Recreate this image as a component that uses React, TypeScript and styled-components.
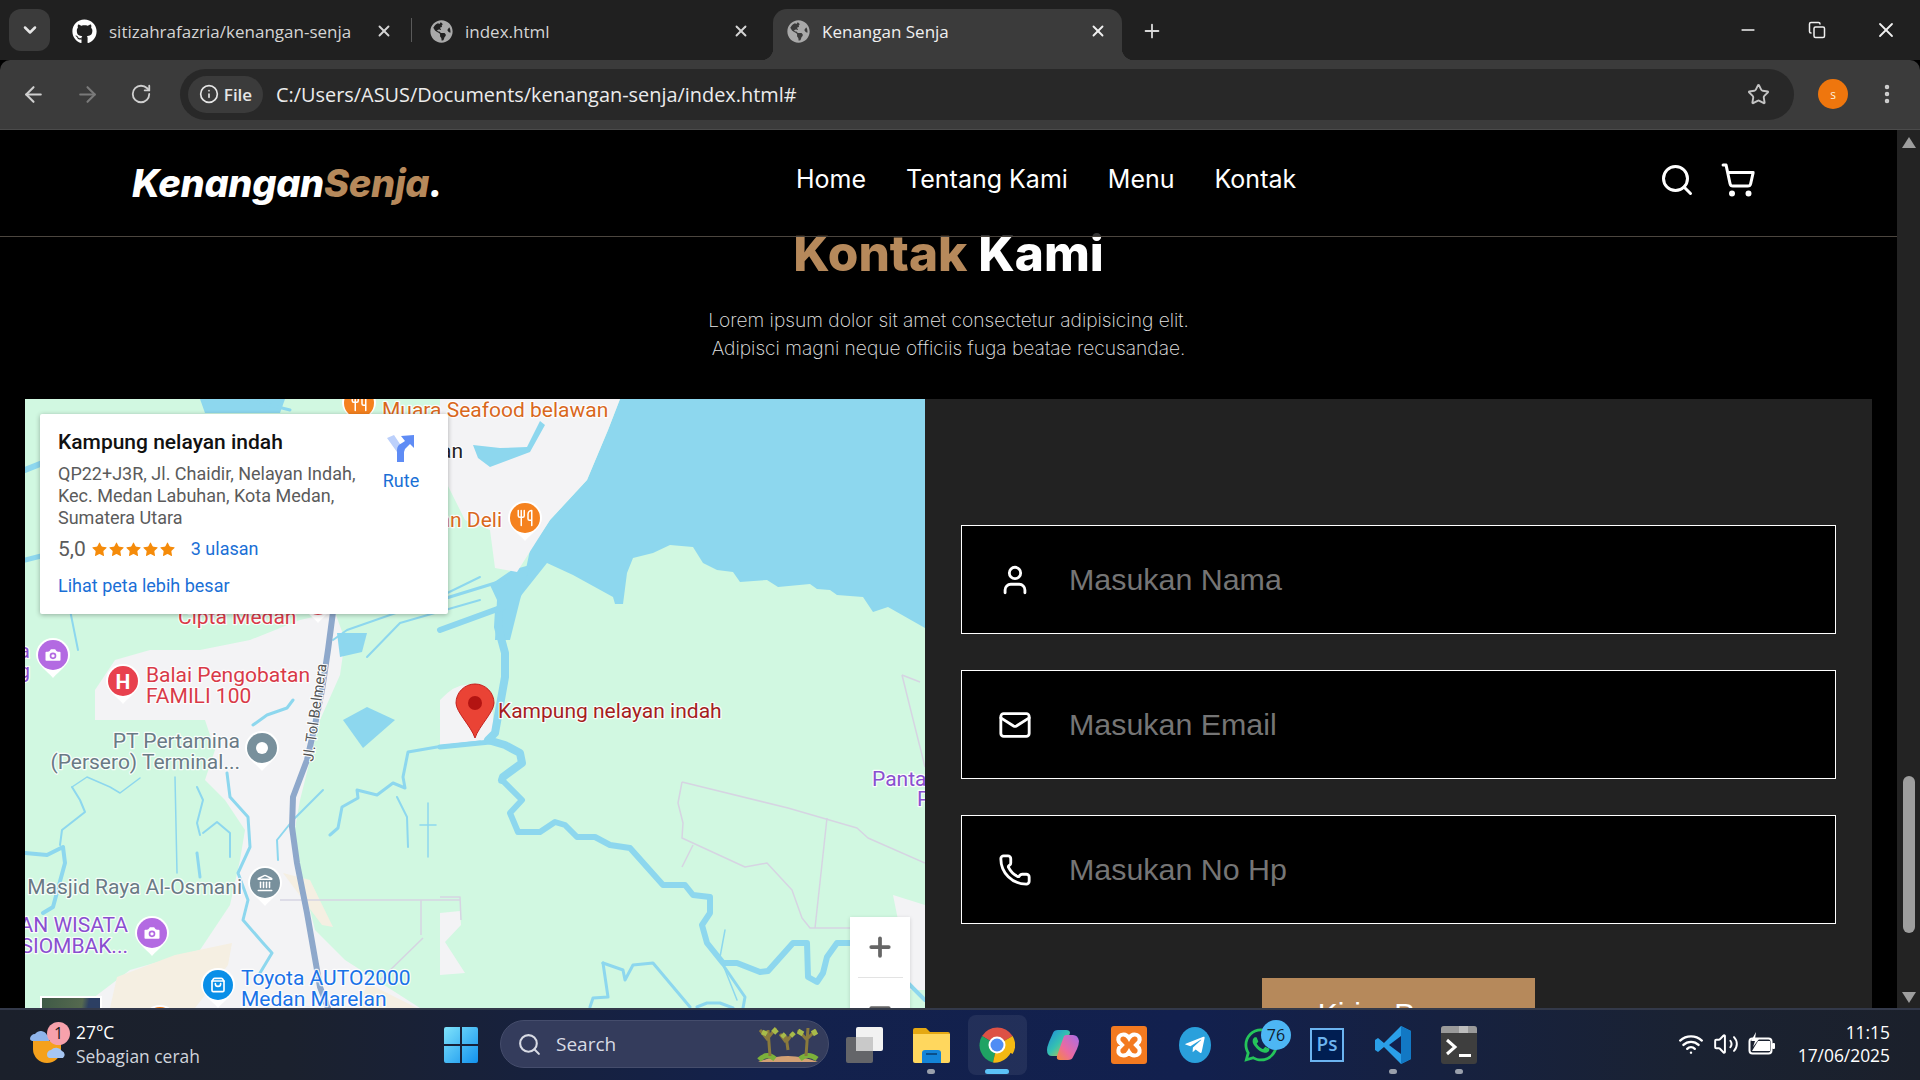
import React from "react";
import styled, { createGlobalStyle } from "styled-components";
import {
  ArrowLeft, ArrowRight, Camera, ChevronDown, Info, Landmark, Mail, Minus, MoreVertical, Phone, Plus,
  RotateCw, Search, ShoppingBag, ShoppingCart, Star, User, Utensils, Volume2, Wifi, X, Copy,
} from "lucide-react";
import { FaGithub, FaGlobeAmericas, FaTelegramPlane, FaWhatsapp } from "react-icons/fa";

const Global = createGlobalStyle`
  html, body { margin: 0; padding: 0; background: #000; }
  * { box-sizing: border-box; }
`;

const Screen = styled.div`
  width: 1920px; height: 1080px; overflow: hidden; display: flex; flex-direction: column;
  font-family: "Open Sans", sans-serif; color: #fff; background: #000;
`;

/* ---------- browser chrome ---------- */
const TabStrip = styled.div`
  height: 60px; background: #202020; display: flex; align-items: flex-end;
`;
const ListButton = styled.div`
  width: 41px; height: 42px; margin: 0 8px 9px 9px; border-radius: 12px; background: #3b3b3b;
  display: flex; align-items: center; justify-content: center; color: #e6e6e6;
`;
const Tab = styled.div<{ $w: number; $l: number; $r: number; $active?: boolean }>`
  position: relative; width: ${(p) => p.$w}px; height: 51px;
  padding: 0 ${(p) => p.$r}px 7px ${(p) => p.$l}px; display: flex; align-items: center; gap: 12px;
  font-size: 17px; color: ${(p) => (p.$active ? "#f0f0f0" : "#d4d4d4")};
  background: ${(p) => (p.$active ? "#3b3b3b" : "transparent")};
  border-radius: ${(p) => (p.$active ? "14px 14px 0 0" : "0")};
  ${(p) =>
    p.$active
      ? `&::before, &::after { content: ""; position: absolute; bottom: 0; width: 12px; height: 12px; }
         &::before { left: -12px; background: radial-gradient(circle at 0 0, transparent 12px, #3b3b3b 12.5px); }
         &::after { right: -12px; background: radial-gradient(circle at 100% 0, transparent 12px, #3b3b3b 12.5px); }`
      : ""}
`;
const TabTitle = styled.span`
  flex: 1; white-space: nowrap; overflow: hidden;
`;
const Divider = styled.div`
  position: absolute; right: 0; top: 9px; height: 24px; width: 1px; background: #5a5a5a;
`;
const PlusButton = styled.div`
  width: 60px; height: 51px; padding-bottom: 7px; display: flex; align-items: center; justify-content: center; color: #d8d8d8;
`;
const Spring = styled.div`
  flex: 1;
`;
const WinButton = styled.div`
  width: 69px; height: 60px; display: flex; align-items: center; justify-content: center; color: #f0f0f0;
`;
const Toolbar = styled.div`
  height: 70px; background: #3b3b3b; border-bottom: 1px solid #4b4b4b; border-radius: 10px 10px 0 0;
  display: flex; align-items: center; padding: 0 18px 1px 6px;
`;
const NavButton = styled.div<{ $dim?: boolean }>`
  width: 54px; height: 50px; display: flex; align-items: center; justify-content: center;
  color: ${(p) => (p.$dim ? "#7a7a7a" : "#cfcfcf")};
`;
const Omnibox = styled.div`
  flex: 1; height: 51px; margin-left: 12px; border-radius: 26px; background: #282828;
  display: flex; align-items: center; padding: 0 24px 0 8px;
`;
const InfoChip = styled.div`
  width: 75px; height: 37px; border-radius: 19px; background: #3b3b3b; display: flex; align-items: center;
  justify-content: center; gap: 5px; font-size: 17px; font-weight: 600; color: #e6e6e6;
`;
const UrlText = styled.span`
  flex: 1; margin-left: 13px; font-size: 19.9px; color: #ececec; white-space: nowrap;
`;
const AvatarSlot = styled.div`
  width: 78px; display: flex; justify-content: center;
`;
const Avatar = styled.div`
  width: 30px; height: 30px; border-radius: 50%; background: #ef760d; display: flex; align-items: center;
  justify-content: center; font-size: 12px; color: #fff0dc;
`;
const MenuDots = styled.div`
  width: 30px; display: flex; justify-content: center; color: #d0d0d0;
`;

/* ---------- page ---------- */
const Viewport = styled.div`
  flex: 1; min-height: 0; display: flex;
`;
const Page = styled.div`
  flex: 1; min-width: 0; overflow: hidden; background: #000; display: flex; flex-direction: column;
`;
const Scrollbar = styled.div`
  width: 23px; background: #232323; display: flex; flex-direction: column; align-items: center; padding: 7px 0 5px;
`;
const ScrollThumb = styled.div`
  width: 12px; height: 157px; margin-top: 628px; border-radius: 6px; background: #9e9e9e;
`;
const ScrollArrow = styled.div<{ $down?: boolean }>`
  width: 0; height: 0; border-left: 7px solid transparent; border-right: 7px solid transparent;
  ${(p) => (p.$down ? "border-top: 11px solid #9e9e9e; margin-top: auto;" : "border-bottom: 11px solid #9e9e9e;")}
`;
const Header = styled.header`
  flex: none; height: 107px; position: relative; z-index: 2; background: rgba(0, 0, 0, 0.8);
  border-bottom: 1px solid #4c463f; display: flex; align-items: center; padding: 0 132px;
`;
const Logo = styled.div`
  width: 664px; font-family: Inter, sans-serif; font-size: 38px; font-weight: 800; font-style: italic; letter-spacing: -0.3px; color: #fff;
  white-space: nowrap;
  span { color: #b6895b; }
`;
const NavList = styled.nav`
  display: flex; gap: 40px; margin-bottom: 8px; font-family: Inter, sans-serif; font-size: 25px; color: #fff; white-space: nowrap;
`;
const HeaderIcons = styled.div`
  margin-left: auto; display: flex; gap: 25px; margin-right: 9px; margin-bottom: 6px; color: #fff;
`;
const Section = styled.section`
  flex: none; margin-top: -14px; text-align: center;
`;
const Title = styled.h2`
  margin: 0; font-family: Inter, sans-serif; font-size: 49.5px; font-weight: 800; line-height: 60px; color: #fff;
  span { color: #b6895b; }
`;
const Lead = styled.p`
  margin: 23px 0 37px; font-family: Inter, sans-serif; font-size: 19.2px; font-weight: 200; line-height: 28px; color: #e6e6e6;
`;
const ContactRow = styled.div`
  flex: none; margin: 0 25px; display: grid; grid-template-columns: 900px 1fr; background: #222;
`;
const MapBox = styled.div`
  position: relative; height: 720px; overflow: hidden; background: #d1f8e1; font-family: Roboto, sans-serif;
`;
const MapSvg = styled.svg`
  display: block;
`;
const Water = styled.path`
  fill: #8dd7ee;
`;
const River = styled.polyline<{ $w?: number }>`
  fill: none; stroke: #8dd7ee; stroke-width: ${(p) => p.$w ?? 2}; stroke-linejoin: round; stroke-linecap: round;
`;
const Urban = styled.path<{ $beige?: boolean }>`
  fill: ${(p) => (p.$beige ? "#f5efe2" : "#f3f3f5")};
`;
const Boundary = styled.polyline`
  fill: none; stroke: #d6d4e2; stroke-width: 1.5; stroke-linejoin: round;
`;
const Highway = styled.polyline`
  fill: none; stroke: #8ea8cb; stroke-width: 6; stroke-linejoin: round; stroke-linecap: round;
`;
const Label = styled.text<{ $c: string; $anchor?: string }>`
  font-family: Roboto, sans-serif; font-size: 21px; fill: ${(p) => p.$c}; text-anchor: ${(p) => p.$anchor ?? "start"};
  stroke: rgba(255, 255, 255, 0.85); stroke-width: 2.5px; paint-order: stroke; stroke-linejoin: round;
`;
const RoadLabel = styled.text`
  font-family: Roboto, sans-serif; font-size: 15px; fill: #555; stroke: #fff; stroke-width: 2px; paint-order: stroke;
`;
const InfoCard = styled.div`
  position: absolute; left: 15px; top: 15px; width: 408px; height: 200px; padding: 16px 17px 15px 18px; background: #fff;
  box-shadow: 0 1px 5px rgba(0, 0, 0, 0.3); border-radius: 2px; display: flex; justify-content: space-between;
`;
const PlaceCol = styled.div`
  display: flex; flex-direction: column; align-items: flex-start;
`;
const PlaceName = styled.div`
  font-size: 21px; font-weight: 500; line-height: 24px; color: #111; white-space: nowrap;
`;
const PlaceAddress = styled.div`
  width: 310px; margin-top: 9px; font-size: 18px; line-height: 22px; color: #5b5b5b;
`;
const RatingRow = styled.div`
  margin-top: 6px; height: 28px; display: flex; align-items: center; font-size: 21px; color: #5b5b5b;
`;
const Stars = styled.div`
  display: flex; margin-left: 5px; color: #f58b0a;
`;
const BlueLink = styled.span<{ $gap?: number }>`
  margin-left: ${(p) => p.$gap ?? 0}px; font-size: 18px; color: #1a6fd6; line-height: 24px;
`;
const LargerMap = styled.div`
  margin-top: 11px;
`;
const DirectionCol = styled.div`
  width: 60px; margin-top: 5px; display: flex; flex-direction: column; align-items: center; gap: 6px;
`;
const ZoomBox = styled.div`
  position: absolute; left: 825px; top: 518px; width: 60px; height: 122px; background: #fff; display: flex; flex-direction: column;
  align-items: center; color: #666; box-shadow: 0 1px 4px rgba(0, 0, 0, 0.15);
`;
const ZoomCell = styled.div`
  width: 45px; height: 60px; display: flex; align-items: center; justify-content: center;
`;
const ZoomRule = styled.div`
  width: 45px; height: 1px; background: #e3e3e3;
`;
const LayerThumb = styled.div`
  position: absolute; left: 15px; top: 597px; width: 62px; height: 62px; border: 2px solid #fff;
  background: linear-gradient(100deg, #3f5a46, #55694f 60%, #2c3f63 70%);
`;
const FormPanel = styled.form`
  background: #222; padding: 126px 36px 0; display: flex; flex-direction: column; gap: 36px;
`;
const Field = styled.label`
  height: 109px; background: #000; border: 1px solid #fff; display: flex; align-items: center; gap: 35px; padding-left: 36px; color: #fff;
`;
const FieldInput = styled.input`
  flex: 1; min-width: 0; background: transparent; border: 0; outline: 0; color: #fff;
  font-family: "Liberation Sans", Arial, sans-serif; font-size: 30.4px;
  &::placeholder { color: #757575; opacity: 1; }
`;
const SendButton = styled.div`
  align-self: center; width: 273px; height: 66px; margin-top: 18px; padding-top: 5px; background: #b6895b; color: #fff;
  font-family: "Liberation Sans", Arial, sans-serif; font-size: 30px; display: flex; align-items: center; justify-content: center;
`;

/* ---------- taskbar ---------- */
const Taskbar = styled.div`
  flex: none; height: 72px; border-top: 2px solid #33394a; display: flex; align-items: center;
  background: linear-gradient(90deg, #1b202b 0%, #1b212e 15%, #13214c 40%, #12204e 62%, #1a2232 88%, #1b202b 100%);
`;
const WeatherBlock = styled.div`
  width: 444px; padding-left: 30px; padding-bottom: 2px; display: flex; align-items: center; gap: 10px;
`;
const WeatherIcon = styled.div`
  position: relative; width: 36px; height: 38px;
`;
const Badge = styled.div`
  position: absolute; left: 17px; top: -3px; width: 23px; height: 23px; border-radius: 50%; background: #f7a1ab; color: #1b1b1b;
  font-size: 16px; line-height: 23px; text-align: center;
`;
const WeatherText = styled.div`
  font-size: 17.4px; line-height: 24px; color: #fff; white-space: nowrap;
  small { display: block; font-size: 17.4px; color: #d0d4dc; }
`;
const SearchPill = styled.div`
  width: 329px; height: 48px; margin-left: 22px; margin-bottom: 2px; border-radius: 24px; background: #343c5c; border: 1px solid #454d6c;
  padding: 0 8px 0 16px; display: flex; align-items: center; gap: 14px; font-size: 19px; color: #d8dbe4;
`;
const AppRow = styled.div`
  display: flex; margin-left: 3px;
`;
const AppCell = styled.div<{ $active?: boolean }>`
  position: relative; width: 66px; height: 60px; display: flex; align-items: center; justify-content: center;
  ${(p) => (p.$active ? "&::before { content: ''; position: absolute; left: 4px; right: 3px; top: 0; bottom: 0; border-radius: 8px; background: rgba(255,255,255,.07); }" : "")}
`;
const AppDot = styled.div<{ $on?: boolean }>`
  position: absolute; left: 50%; bottom: 1px; transform: translateX(-50%); height: 5px; border-radius: 3px;
  width: ${(p) => (p.$on ? 24 : 8)}px; background: ${(p) => (p.$on ? "#5cc2f7" : "#9aa0ac")};
`;
const Ps = styled.div`
  width: 34px; height: 34px; background: #001e52; border: 2px solid #6cb4f0; color: #6cb4f0; font-family: "Open Sans", sans-serif;
  font-size: 19px; font-weight: 600; line-height: 29px; text-align: center;
`;
const WaBadge = styled.div`
  position: absolute; left: 33px; top: 5px; width: 30px; height: 30px; border-radius: 50%; background: #4db6f4; color: #10202c;
  font-size: 16px; line-height: 30px; text-align: center;
`;
const PlaneMark = styled.div`
  position: absolute; display: flex; color: #fff;
`;
const Tray = styled.div`
  margin-left: auto; display: flex; align-items: center; padding: 0 30px 2px 0; color: #fff;
`;
const TrayIcons = styled.div`
  display: flex; align-items: center; gap: 9px; margin-right: 22px;
`;
const Clock = styled.div`
  font-size: 17.4px; line-height: 23px; text-align: right; color: #fff;
`;

/* ---------- drawings ---------- */
const Pin = ({ x, y, c, children }: { x: number; y: number; c: string; children?: React.ReactNode }) => (
  <g transform={`translate(${x} ${y})`}>
    <path d="M-17 0a17 17 0 1 1 34 0c0 9-11 16-17 23c-6-7-17-14-17-23z" fill="#fff" />
    <circle r="15" fill={c} />
    {children}
  </g>
);
const MapGlyph = styled.g`
  color: #fff;
`;
const PinLetter = styled.text`
  font-family: Roboto, sans-serif; font-size: 21px; font-weight: 700; fill: #fff; text-anchor: middle;
`;

const rivers: [string, number][] = [
  ["502,780 522,800 510,813 518,832 540,832 555,822 565,825 577,837 595,837 610,845 630,848 663,885 685,885 693,895 710,897 710,913 702,925 707,943 723,963 737,963 760,972 768,971 793,943 807,943 808,977 817,982 823,973 827,957 837,943 860,943", 6],
  ["499,610 498,627 505,653 505,677 495,733 488,740 505,745 520,753 522,763 503,777 502,780", 8],
  ["440,747 490,742", 5],
  ["440,630 503,607", 6],
  ["440,600 505,580", 3],
  ["480,577 433,600 347,630 333,640", 2],
  ["480,600 400,623 367,657", 2],
  ["905,980 925,1000", 4],
  ["603,963 623,970 625,980 633,965 653,963 690,1007", 3],
  ["603,963 608,997 593,998 590,1007", 3],
  ["697,1007 707,1003 720,1003 733,1008", 3],
  ["723,965 745,997 743,1008", 3],
  ["725,930 720,957 737,1000", 1.5],
  ["293,700 287,708 267,715 253,725", 3],
  ["480,742 437,747 408,752 403,777 405,788 393,783 377,795 357,790 358,798 342,807 338,828 330,835", 3],
  ["397,797 407,817 408,847", 2],
  ["428,803 428,857", 1.5],
  ["420,825 436,825", 1.5],
  ["72,787 80,800 85,812 62,830 60,845", 2],
  ["25,853 47,855 63,847 65,863 53,907 43,913", 4],
  ["72,787 87,777 110,787 120,793 140,778", 1.5],
  ["175,777 177,873", 1.5],
  ["197,787 203,800 197,823 200,835", 2],
  ["197,853 200,877", 3],
  ["203,833 217,822 230,833 230,857", 2],
  ["227,773 230,797 248,817 250,847 238,873 248,900 243,920 263,943 272,953 260,973", 3],
  ["323,790 293,820 277,840 278,860", 2],
  ["25,470 50,460 75,470", 6],
  ["25,560 45,555", 5],
  ["70,610 78,650", 2],
  ["250,400 290,410", 3],
];
const boundaries = [
  "682,782 678,803 683,823 682,838 745,867 767,863 792,890 802,918 810,928 860,928",
  "682,782 788,808 857,828 868,838 925,863",
  "827,818 815,928",
  "693,845 682,867",
  "902,675 925,767",
  "902,675 920,682",
  "440,897 460,897 461,920",
  "280,900 460,900",
  "421,900 421,935",
  "380,980 423,938",
];

const MapDrawing = () => (
  <MapSvg width="900" height="609" viewBox="25 399 900 609">
    <Water d="M620 399 L608 430 L587 480 L550 520 L530 550 L520 597 L547 563 L573 575 L613 597 L615 604 L623 604 L627 573 L633 558 L653 553 L670 545 L693 547 L703 563 L717 570 L733 572 L740 582 L767 580 L778 587 L810 584 L817 589 L830 590 L837 595 L863 597 L873 612 L888 607 L925 628 L925 399 Z" />
    <Water d="M512 570 L530 565 L520 600 L510 640 L495 640 L497 600 L490 585 Z" />
    <Urban d="M440 399 L620 399 L608 430 L587 480 L550 520 L517 572 L495 568 L490 530 L465 520 L440 470 Z" />
    <Water d="M473 445 L500 448 L527 447 L540 421 L545 425 L530 452 L490 467 L478 458 Z" />
    <Water d="M200 399 L285 399 L280 413 L205 413 Z" />
    <Urban d="M440 700 Q465 672 488 695 Q497 715 490 741 L440 746 Z" />
    <Urban d="M95 690 L115 660 L150 650 L200 650 L250 640 L300 620 L335 612 L345 640 L340 675 L320 720 L310 760 L300 800 L293 840 L300 870 L315 930 L345 960 L420 1008 L80 1008 L130 970 L200 950 L230 905 L240 860 L245 830 L225 800 L205 780 L215 750 L205 720 L95 720 Z" />
    <Urban $beige d="M117 977 L175 955 L232 943 L228 965 L195 1008 L110 1008 Z" />
    <Urban $beige d="M283 873 L310 880 L333 927 L322 925 Z" />
    <Urban $beige d="M367 983 L417 1008 L360 1008 Z" />
    <Urban d="M893 895 L925 905 L925 990 L905 990 L900 930 Z" />
    <Urban d="M440 913 L460 911 L461 925 L445 942 L465 973 L440 975 Z" />
    <Water d="M343 720 L367 707 L395 720 L363 748 Z" />
    <Water d="M337 633 L367 633 L362 652 L340 657 Z" />
    {rivers.map(([points, width]) => (
      <River key={points} points={points} $w={width} />
    ))}
    {boundaries.map((points) => (
      <Boundary key={points} points={points} />
    ))}
    <Highway points="333,612 328,650 322,690 315,725 307,760 293,797 292,827 297,863 307,913 320,987 328,1008" />
    <RoadLabel transform="translate(313 762) rotate(-82)">Jl. Tol Belmera</RoadLabel>

    <Label x="382" y="417" $c="#d9681d">Muara Seafood belawan</Label>
    <Label x="463" y="458" $c="#222" $anchor="end">Belawan</Label>
    <Label x="502" y="527" $c="#d9681d" $anchor="end">Kuliner Belawan Deli</Label>
    <Label x="178" y="624" $c="#d93a48">Cipta Medan</Label>
    <Label x="30" y="658" $c="#8a4fd0" $anchor="end">a</Label>
    <Label x="30" y="678" $c="#8a4fd0" $anchor="end">g</Label>
    <Label x="146" y="682" $c="#d93a48">Balai Pengobatan</Label>
    <Label x="146" y="703" $c="#d93a48">FAMILI 100</Label>
    <Label x="498" y="718" $c="#a51d20">Kampung nelayan indah</Label>
    <Label x="240" y="748" $c="#6a7a85" $anchor="end">PT Pertamina</Label>
    <Label x="240" y="769" $c="#6a7a85" $anchor="end">(Persero) Terminal...</Label>
    <Label x="242" y="894" $c="#6a7a85" $anchor="end">Masjid Raya Al-Osmani</Label>
    <Label x="128" y="932" $c="#8a4fd0" $anchor="end">AN WISATA</Label>
    <Label x="128" y="953" $c="#8a4fd0" $anchor="end">SIOMBAK...</Label>
    <Label x="241" y="985" $c="#1a73e8">Toyota AUTO2000</Label>
    <Label x="241" y="1006" $c="#1a73e8">Medan Marelan</Label>
    <Label x="872" y="786" $c="#8a4fd0">Pantai</Label>
    <Label x="917" y="806" $c="#8a4fd0">P</Label>

    <Pin x={359} y={403} c="#f5821f"><MapGlyph><Utensils x={-9} y={-9} size={18} /></MapGlyph></Pin>
    <Pin x={525} y={518} c="#f5821f"><MapGlyph><Utensils x={-9} y={-9} size={18} /></MapGlyph></Pin>
    <Pin x={318} y={600} c="#e8414e" />
    <Pin x={53} y={655} c="#b36ae2"><MapGlyph><Camera x={-10} y={-10} size={20} fill="#fff" stroke="#b36ae2" /></MapGlyph></Pin>
    <Pin x={123} y={681} c="#e8414e"><PinLetter y={8}>H</PinLetter></Pin>
    <Pin x={262} y={748} c="#78909c"><circle r="6" fill="#fff" /></Pin>
    <Pin x={265} y={883} c="#78909c"><MapGlyph><Landmark x={-9} y={-9} size={18} /></MapGlyph></Pin>
    <Pin x={152} y={933} c="#b36ae2"><MapGlyph><Camera x={-10} y={-10} size={20} fill="#fff" stroke="#b36ae2" /></MapGlyph></Pin>
    <Pin x={218} y={985} c="#0a8fe8"><MapGlyph><ShoppingBag x={-8} y={-8} size={16} strokeWidth={2.5} /></MapGlyph></Pin>
    <Pin x={160} y={1022} c="#f5821f" />

    <path d="M475 738c-4-12-19-26-19-35a19 19 0 1 1 38 0c0 9-15 23-19 35z" fill="#ea4335" stroke="#c5221f" strokeWidth="1" />
    <circle cx="475" cy="703" r="7" fill="#b31412" />
  </MapSvg>
);

const DirectionsIcon = () => (
  <svg width="28" height="28" viewBox="0 0 28 28">
    <path d="M0 3 7 0l10 15v12h-7V17z" fill="#bcd0fb" />
    <path d="M10 27V15q0-5 5-7l3-2-4-5 13-1v13l-4-4-3 3q-3 2-3 5v10z" fill="#5f8cf5" />
  </svg>
);

const WeatherArt = () => (
  <svg width="36" height="38" viewBox="0 0 36 38">
    <path d="M3 16h28v8a14 14 0 0 1-28 0z" fill="#f5a11c" />
    <path d="M0 14a5 5 0 0 1 5-5 7 7 0 0 1 12 1 4 4 0 0 1 2 6H2q-2-1-2-2z" fill="#8fb4ea" />
    <path d="M17 30a5 5 0 0 1 4-5 7 7 0 0 1 11 1 4 4 0 0 1 1 7H19q-2-1-2-3z" fill="#a6c6f2" />
  </svg>
);
const WinLogo = () => (
  <svg width="34" height="36" viewBox="0 0 34 36">
    <defs>
      <linearGradient id="w" x1="0" y1="0" x2="1" y2="1">
        <stop offset="0" stopColor="#7fe3fb" />
        <stop offset="1" stopColor="#1292ee" />
      </linearGradient>
    </defs>
    <path d="M0 2q0-2 2-2h14v17H0zM18 0h14q2 0 2 2v15H18zM0 19h16v17H2q-2 0-2-2zM18 19h16v15q0 2-2 2H18z" fill="url(#w)" />
  </svg>
);
const SearchScene = () => (
  <svg width="64" height="40" viewBox="0 0 64 40">
    <path d="M2 38q30-12 60 0z" fill="#d2a074" />
    <path d="M3 36q8-8 16-1M44 35q8-7 17 0" stroke="#7cb13a" strokeWidth="5" fill="none" />
    <path d="M14 32 12 6M12 16 4 6M12 14l8-10M50 32l2-28M51 16l-9-10M52 14l8-8M32 26 30 12M30 18l-6-8M31 17l6-8" stroke="#8a7a3c" strokeWidth="3" fill="none" />
    <path d="M6 8l5 2M17 5l4 4M42 7l5 3M57 6l3 5M26 10l3 3M35 9l3 3" stroke="#a8bb4a" strokeWidth="5" fill="none" />
  </svg>
);
const TaskView = () => (
  <svg width="38" height="36" viewBox="0 0 38 36">
    <rect x="10" y="0" width="27" height="24" rx="2" fill="#f2f2f2" />
    <rect x="0" y="10" width="27" height="26" rx="2" fill="#6b6b6b" opacity=".92" />
    <rect x="10" y="10" width="17" height="14" fill="#c9c9c9" />
  </svg>
);
const FolderIcon = () => (
  <svg width="37" height="36" viewBox="0 0 37 36">
    <path d="M0 3q0-2 2-2h11l4 4h18q2 0 2 2v5H0z" fill="#e5a812" />
    <path d="M0 7h37v27q0 2-2 2H2q-2 0-2-2z" fill="#ffd75e" />
    <path d="M9 36V26q0-3 3-3h13q3 0 3 3v10z" fill="#1484d8" />
    <rect x="13" y="26" width="11" height="2" fill="#0a4f8a" />
  </svg>
);
const ChromeIcon = () => (
  <svg width="36" height="36" viewBox="0 0 36 36">
    <path d="M18 18 3 9A18 18 0 0 1 33.6 9z" fill="#db4437" />
    <path d="M18 18 3 9a18 18 0 0 0 11 26.6z" fill="#0f9d58" />
    <path d="M18 18h15.6a18 18 0 0 1-19.6 17.6z" fill="#f4b400" />
    <path d="M18 18 33.6 9A18 18 0 0 1 33.6 27z" fill="#f4b400" />
    <circle cx="18" cy="18" r="8.5" fill="#fff" />
    <circle cx="18" cy="18" r="6.5" fill="#4285f4" />
  </svg>
);
const CopilotIcon = () => (
  <svg width="34" height="34" viewBox="0 0 34 34">
    <defs>
      <linearGradient id="c1" x1="0" y1="0" x2="1" y2="1">
        <stop offset="0" stopColor="#1d8ce0" />
        <stop offset=".5" stopColor="#35c1b0" />
        <stop offset="1" stopColor="#f3c025" />
      </linearGradient>
      <linearGradient id="c2" x1="1" y1="0" x2="0" y2="1">
        <stop offset="0" stopColor="#a96de8" />
        <stop offset=".6" stopColor="#ec6a9e" />
        <stop offset="1" stopColor="#f58a3c" />
      </linearGradient>
    </defs>
    <path d="M12 2h8q4 0 4 3l-8 20q-1 3-5 3H6q-5 0-5-6 0-3 2-8l4-9q1-3 5-3z" fill="url(#c1)" />
    <path d="M22 32h-8q-4 0-3-4l7-20q1-1 3-1h6q5 0 6 6 0 3-2 8l-4 8q-1 3-5 3z" fill="url(#c2)" />
  </svg>
);
const XamppIcon = () => (
  <svg width="36" height="38" viewBox="0 0 36 38">
    <rect width="36" height="38" rx="3" fill="#f37a20" />
    <path d="M10 9q5-2 8 3 3-5 8-3 4 2 2 7l-3 3 3 3q2 5-2 7-5 2-8-3-3 5-8 3-4-2-2-7l3-3-3-3q-2-5 2-7z" fill="none" stroke="#fff" strokeWidth="4" />
  </svg>
);
const TelegramIcon = () => (
  <svg width="32" height="36" viewBox="0 0 32 36">
    <ellipse cx="16" cy="18" rx="16" ry="18" fill="#2aa0dc" />
  </svg>
);
const VsCodeIcon = () => (
  <svg width="36" height="38" viewBox="0 0 36 38">
    <path d="M26 0 36 5v28L26 38 9 21 3 26 0 24V14l3-2 6 5z" fill="#2a9fe8" />
    <path d="M26 0 36 5v28L26 38z" fill="#1278c4" />
    <path d="M26 10 14 19l12 9z" fill="#12204e" />
  </svg>
);
const TerminalIcon = () => (
  <svg width="36" height="38" viewBox="0 0 36 38">
    <rect width="36" height="38" rx="3" fill="#3e3e3e" />
    <path d="M0 3q0-3 3-3h30q3 0 3 3v4H0z" fill="#9a9a9a" />
    <rect x="18" y="0" width="9" height="7" fill="#bdbdbd" />
    <path d="M6 14l8 7-8 7" fill="none" stroke="#fff" strokeWidth="3" />
    <rect x="18" y="28" width="12" height="3" fill="#fff" />
  </svg>
);
const BatteryIcon = () => (
  <svg width="28" height="24" viewBox="0 0 28 24">
    <rect x="1.5" y="6.5" width="22" height="15" rx="3" fill="none" stroke="#fff" strokeWidth="2" />
    <rect x="24" y="11" width="3" height="6" rx="1" fill="#fff" />
    <path d="M4 19 10 9h12v10z" fill="#fff" />
    <path d="M8 0 3 9h4l-2 6 6-8H7z" fill="#fff" />
  </svg>
);

const fields = [
  { icon: <User size={34} strokeWidth={2} />, text: "Masukan Nama" },
  { icon: <Mail size={34} strokeWidth={2} />, text: "Masukan Email" },
  { icon: <Phone size={34} strokeWidth={2} />, text: "Masukan No Hp" },
];

export default function App() {
  return (
    <Screen>
      <Global />
      <TabStrip>
        <ListButton><ChevronDown size={20} strokeWidth={3} /></ListButton>
        <Tab $w={354} $l={14} $r={19}>
          <FaGithub size={25} color="#fff" />
          <TabTitle>sitizahrafazria/kenangan-senja</TabTitle>
          <X size={18} strokeWidth={2.5} />
          <Divider />
        </Tab>
        <Tab $w={361} $l={18} $r={23}>
          <FaGlobeAmericas size={23} color="#a9a9a9" />
          <TabTitle>index.html</TabTitle>
          <X size={18} strokeWidth={2.5} />
        </Tab>
        <Tab $w={349} $l={14} $r={15} $active>
          <FaGlobeAmericas size={23} color="#a9a9a9" />
          <TabTitle>Kenangan Senja</TabTitle>
          <X size={18} strokeWidth={2.5} />
        </Tab>
        <PlusButton><Plus size={22} strokeWidth={2} /></PlusButton>
        <Spring />
        <WinButton><Minus size={20} strokeWidth={2} /></WinButton>
        <WinButton><Copy size={18} strokeWidth={2} /></WinButton>
        <WinButton><X size={24} strokeWidth={1.8} /></WinButton>
      </TabStrip>
      <Toolbar>
        <NavButton><ArrowLeft size={25} strokeWidth={2} /></NavButton>
        <NavButton $dim><ArrowRight size={25} strokeWidth={2} /></NavButton>
        <NavButton><RotateCw size={22} strokeWidth={2} /></NavButton>
        <Omnibox>
          <InfoChip><Info size={20} strokeWidth={2} />File</InfoChip>
          <UrlText>C:/Users/ASUS/Documents/kenangan-senja/index.html#</UrlText>
          <Star size={23} strokeWidth={2} color="#c4c4c4" />
        </Omnibox>
        <AvatarSlot><Avatar>s</Avatar></AvatarSlot>
        <MenuDots><MoreVertical size={24} strokeWidth={2.5} /></MenuDots>
      </Toolbar>
      <Viewport>
        <Page>
          <Header>
            <Logo>Kenangan<span>Senja</span>.</Logo>
            <NavList>
              <span>Home</span>
              <span>Tentang Kami</span>
              <span>Menu</span>
              <span>Kontak</span>
            </NavList>
            <HeaderIcons>
              <Search size={36} strokeWidth={2} />
              <ShoppingCart size={36} strokeWidth={2} />
            </HeaderIcons>
          </Header>
          <Section>
            <Title><span>Kontak</span> Kami</Title>
            <Lead>
              Lorem ipsum dolor sit amet consectetur adipisicing elit.
              <br />
              Adipisci magni neque officiis fuga beatae recusandae.
            </Lead>
          </Section>
          <ContactRow>
            <MapBox>
              <MapDrawing />
              <InfoCard>
                <PlaceCol>
                  <PlaceName>Kampung nelayan indah</PlaceName>
                  <PlaceAddress>QP22+J3R, Jl. Chaidir, Nelayan Indah, Kec. Medan Labuhan, Kota Medan, Sumatera Utara</PlaceAddress>
                  <RatingRow>
                    5,0
                    <Stars>
                      {[0, 1, 2, 3, 4].map((i) => (
                        <Star key={i} size={17} fill="currentColor" strokeWidth={0} />
                      ))}
                    </Stars>
                    <BlueLink $gap={15}>3 ulasan</BlueLink>
                  </RatingRow>
                  <LargerMap><BlueLink>Lihat peta lebih besar</BlueLink></LargerMap>
                </PlaceCol>
                <DirectionCol>
                  <DirectionsIcon />
                  <BlueLink>Rute</BlueLink>
                </DirectionCol>
              </InfoCard>
              <ZoomBox>
                <ZoomCell><Plus size={30} strokeWidth={3} /></ZoomCell>
                <ZoomRule />
                <ZoomCell><Minus size={30} strokeWidth={3} /></ZoomCell>
              </ZoomBox>
              <LayerThumb />
            </MapBox>
            <FormPanel>
              {fields.map((f) => (
                <Field key={f.text}>
                  {f.icon}
                  <FieldInput placeholder={f.text} readOnly />
                </Field>
              ))}
              <SendButton>Kirim Pesan</SendButton>
            </FormPanel>
          </ContactRow>
        </Page>
        <Scrollbar>
          <ScrollArrow />
          <ScrollThumb />
          <ScrollArrow $down />
        </Scrollbar>
      </Viewport>
      <Taskbar>
        <WeatherBlock>
          <WeatherIcon>
            <WeatherArt />
            <Badge>1</Badge>
          </WeatherIcon>
          <WeatherText>
            27°C
            <small>Sebagian cerah</small>
          </WeatherText>
        </WeatherBlock>
        <WinLogo />
        <SearchPill>
          <Search size={25} strokeWidth={2} />
          Search
          <Spring />
          <SearchScene />
        </SearchPill>
        <AppRow>
          <AppCell><TaskView /></AppCell>
          <AppCell><FolderIcon /><AppDot /></AppCell>
          <AppCell $active><ChromeIcon /><AppDot $on /></AppCell>
          <AppCell><CopilotIcon /></AppCell>
          <AppCell><XamppIcon /></AppCell>
          <AppCell>
            <TelegramIcon />
            <PlaneMark><FaTelegramPlane size={22} /></PlaneMark>
          </AppCell>
          <AppCell><FaWhatsapp size={38} color="#25c45a" /><WaBadge>76</WaBadge></AppCell>
          <AppCell><Ps>Ps</Ps></AppCell>
          <AppCell><VsCodeIcon /><AppDot /></AppCell>
          <AppCell><TerminalIcon /><AppDot /></AppCell>
        </AppRow>
        <Tray>
          <TrayIcons>
            <Wifi size={26} strokeWidth={2.2} />
            <Volume2 size={26} strokeWidth={1.8} />
            <BatteryIcon />
          </TrayIcons>
          <Clock>
            11:15
            <br />
            17/06/2025
          </Clock>
        </Tray>
      </Taskbar>
    </Screen>
  );
}
